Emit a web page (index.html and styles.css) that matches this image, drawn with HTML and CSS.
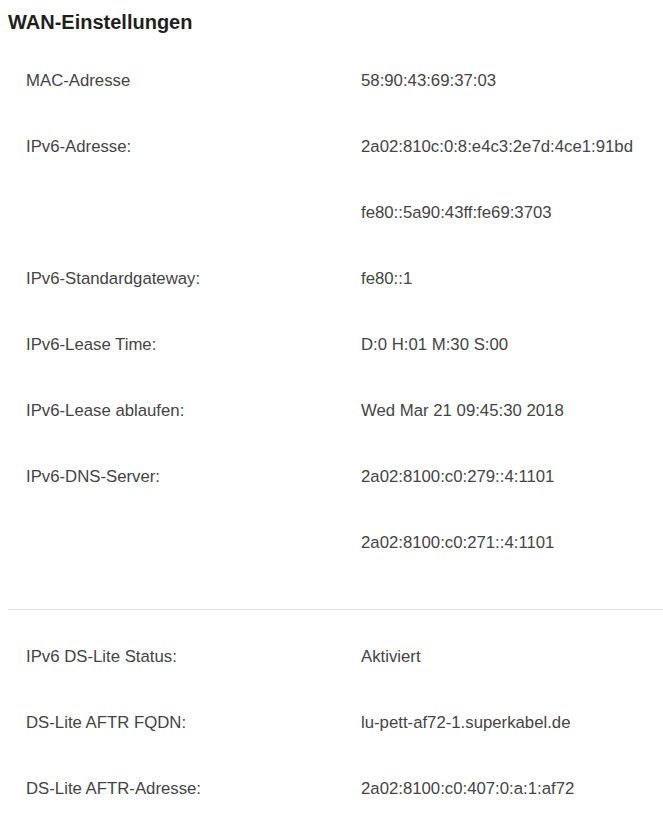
FILE: index.html
```html
<!DOCTYPE html>
<html lang="de">
<head>
  <meta charset="UTF-8">
  <title>WAN-Einstellungen</title>
  <meta name="viewport" content="width=device-width, initial-scale=1.0">
  <link rel="stylesheet" href="styles.css">
</head>
<body>
  <div class="panel">
    <h2 class="title">WAN-Einstellungen</h2>

    <div class="group">
      <div class="row">
        <div class="label">MAC-Adresse</div>
        <div class="value"><div>58:90:43:69:37:03</div></div>
      </div>
      <div class="row">
        <div class="label">IPv6-Adresse:</div>
        <div class="value">
          <div>2a02:810c:0:8:e4c3:2e7d:4ce1:91bd</div>
          <div>fe80::5a90:43ff:fe69:3703</div>
        </div>
      </div>
      <div class="row">
        <div class="label">IPv6-Standardgateway:</div>
        <div class="value"><div>fe80::1</div></div>
      </div>
      <div class="row">
        <div class="label">IPv6-Lease Time:</div>
        <div class="value"><div>D:0 H:01 M:30 S:00</div></div>
      </div>
      <div class="row">
        <div class="label">IPv6-Lease ablaufen:</div>
        <div class="value"><div>Wed Mar 21 09:45:30 2018</div></div>
      </div>
      <div class="row">
        <div class="label">IPv6-DNS-Server:</div>
        <div class="value">
          <div>2a02:8100:c0:279::4:1101</div>
          <div>2a02:8100:c0:271::4:1101</div>
        </div>
      </div>
    </div>

    <hr class="divider">

    <div class="group">
      <div class="row">
        <div class="label">IPv6 DS-Lite Status:</div>
        <div class="value"><div>Aktiviert</div></div>
      </div>
      <div class="row">
        <div class="label">DS-Lite AFTR FQDN:</div>
        <div class="value"><div>lu-pett-af72-1.superkabel.de</div></div>
      </div>
      <div class="row">
        <div class="label">DS-Lite AFTR-Adresse:</div>
        <div class="value"><div>2a02:8100:c0:407:0:a:1:af72</div></div>
      </div>
    </div>
  </div>
</body>
</html>
```

FILE: styles.css
```css
body {
  margin: 0;
  padding: 0;
  background: #fff;
  font-family: "Liberation Sans", Arial, sans-serif;
  color: #444;
}

.panel {
  padding: 10px 0 0 8px;
}

.title {
  margin: 0 0 14px;
  font-size: 20px;
  line-height: 24px;
  font-weight: bold;
  color: #1f1f1f;
}

.row {
  display: grid;
  grid-template-columns: 335px 1fr;
  padding-left: 18px;
  font-size: 16.75px;
  line-height: 66px;
}

.label,
.value {
  white-space: nowrap;
}

.divider {
  margin: 33px 0 14px;
  border: 0;
  border-top: 1px solid #e0e0e0;
  height: 0;
}
```
